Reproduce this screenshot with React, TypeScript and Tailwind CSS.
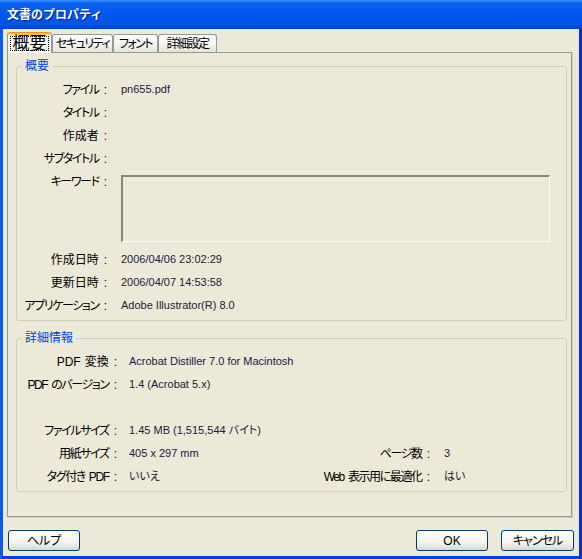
const summaryRows = [
  { label: "ファイル", value: "pn655.pdf", tight: true },
  { label: "タイトル", value: "", tight: true },
  { label: "作成者", value: "", tight: false },
  { label: "サブタイトル", value: "", tight: true },
];

const dateRows = [
  { label: "作成日時", value: "2006/04/06 23:02:29", tight: false },
  { label: "更新日時", value: "2006/04/07 14:53:58", tight: false },
  { label: "アプリケーション", value: "Adobe Illustrator(R) 8.0", tight: true },
];

const detailRows = [
  { label: "PDF 変換", value: "Acrobat Distiller 7.0 for Macintosh", tight: false },
  { label: "PDF のバージョン", value: "1.4 (Acrobat 5.x)", tight: true },
  { label: "", value: "", tight: false },
  { label: "ファイルサイズ", value: "1.45 MB (1,515,544 バイト)", tight: true },
  { label: "用紙サイズ", value: "405 x 297 mm", tight: true, label2: "ページ数", value2: "3" },
  { label: "タグ付き PDF", value: "いいえ", tight: true, label2: "Web 表示用に最適化", value2: "はい" },
];

const tabs = [
  { name: "セキュリティ", width: "w-[61px]" },
  { name: "フォント", width: "w-[45px]" },
  { name: "詳細設定", width: "w-[59px]" },
];

function Label({ text, width, tight }: { text: string; width: string; tight?: boolean }) {
  const parts = text.split(" ");
  return (
    <span className={`${width} shrink-0 whitespace-nowrap text-right text-[12px] text-black`}>
      {parts.map((part, i) => (
        <span className={`${tight ? "tracking-[-1.4px]" : ""} ${i > 0 ? "ml-[4px]" : ""}`} key={i}>
          {part}
        </span>
      ))}
      {text && <span className="ml-[5px] font-['Liberation_Sans'] text-[12px]">:</span>}
    </span>
  );
}

function Group({ title, children }: { title: string; children: React.ReactNode }) {
  return (
    <fieldset className="rounded-[3px] border border-[#d0d0bf] px-0 pb-[3px]">
      <legend className="ml-[5px] px-[3px] text-[12px] leading-[14px] text-[#0046d5]">{title}</legend>
      <div className="pt-[5px]">{children}</div>
    </fieldset>
  );
}

function Button({ label, className }: { label: string; className?: string }) {
  return (
    <button
      className={`flex h-[21px] items-center justify-center rounded-[3px] border border-[#003c74] bg-[linear-gradient(to_bottom,#ffffff_0%,#f5f4ef_60%,#dcd8cc_100%)] text-[12px] text-black ${className ?? ""}`}
    >
      {label}
    </button>
  );
}

export default function App() {
  return (
    <div className="flex h-[559px] w-[582px] flex-col font-['Liberation_Sans','Noto_Sans_CJK_JP',sans-serif] [font-feature-settings:'palt']">
      <div className="flex h-[29px] shrink-0 items-center bg-[linear-gradient(to_bottom,#3d95ff_0%,#0a63f0_10%,#0058ee_45%,#0054e6_85%,#0040cf_100%)] pl-[7px]">
        <span className="text-[12px] font-bold text-white [font-feature-settings:normal] [text-shadow:1px_1px_0_#0a1a6a]">
          文書のプロパティ
        </span>
      </div>

      <div className="flex flex-1 flex-col border-x-[3px] border-b-[3px] border-l-[#0a5ae8] border-r-[#0a2fcf] border-b-[#0a3ed8] bg-[#ece9d8] pl-[4px] pt-[3px]">
        <div className="relative z-10 flex h-[20px] items-end">
          <div className="-mb-px flex h-[21px] w-[45px] flex-col rounded-t-[3px] border-x border-[#919b9c] bg-[#fcfcfe]">
            <div className="h-[3px] rounded-t-[3px] border-t border-[#e68b2c] bg-[#ffc73c]" />
            <div className="mx-[2px] mt-px flex h-[15px] items-center justify-center border border-dotted border-black text-[17px] leading-none text-black">
              概要
            </div>
          </div>
          {tabs.map((tab) => (
            <div
              className={`${tab.width} flex h-[18px] items-center justify-center whitespace-nowrap rounded-t-[3px] border border-b-0 border-[#919b9c] bg-[linear-gradient(to_bottom,#ffffff_0%,#f3f2ed_60%,#e6e3d8_100%)] pt-px text-[12px] tracking-[-1.5px] text-black`}
              key={tab.name}
            >
              {tab.name}
            </div>
          ))}
        </div>

        <div className="flex h-[465px] w-[565px] flex-col border border-[#919b9c] pl-[8px] pr-[4px] pt-[6px] shadow-[1px_1px_0_#d0cebf]">
          <Group title="概要">
            {summaryRows.map((row) => (
              <div className="flex h-[23px] items-center" key={row.label}>
                <Label text={row.label} width="w-[90px]" tight={row.tight} />
                <span className="ml-[14px] text-[11px] text-[#1a1a40]">{row.value}</span>
              </div>
            ))}
            <div className="mt-[5px] flex items-start">
              <span className="leading-[12px]">
                <Label text="キーワード" width="w-[90px] inline-block" tight />
              </span>
              <div className="ml-[14px] h-[67px] w-[429px] border-b border-l-2 border-r border-t-2 border-b-white border-l-[#87867c] border-r-white border-t-[#87867c]" />
            </div>
            <div className="mt-[6px]">
              {dateRows.map((row) => (
                <div className="flex h-[23px] items-center" key={row.label}>
                  <Label text={row.label} width="w-[90px]" tight={row.tight} />
                  <span className="ml-[14px] text-[11px] text-[#1a1a40]">{row.value}</span>
                </div>
              ))}
            </div>
          </Group>

          <div className="mt-[10px]">
            <Group title="詳細情報">
              {detailRows.map((row, i) => (
                <div className="flex h-[23px] items-center" key={i}>
                  <Label text={row.label} width="w-[100px]" tight={row.tight} />
                  <span className="ml-[12px] w-[131px] shrink-0 whitespace-nowrap text-[11px] text-[#1a1a40]">
                    {row.value}
                  </span>
                  {row.label2 && (
                    <>
                      <Label text={row.label2} width="w-[170px]" tight />
                      <span className="ml-[14px] text-[11px] text-[#1a1a40]">{row.value2}</span>
                    </>
                  )}
                </div>
              ))}
            </Group>
          </div>
        </div>

        <div className="mt-[13px] flex items-center">
          <Button label="ヘルプ" className="ml-px w-[72px]" />
          <Button label="OK" className="ml-[336px] w-[72px]" />
          <Button label="キャンセル" className="ml-[13px] w-[73px] tracking-[-1px]" />
        </div>
      </div>
    </div>
  );
}
